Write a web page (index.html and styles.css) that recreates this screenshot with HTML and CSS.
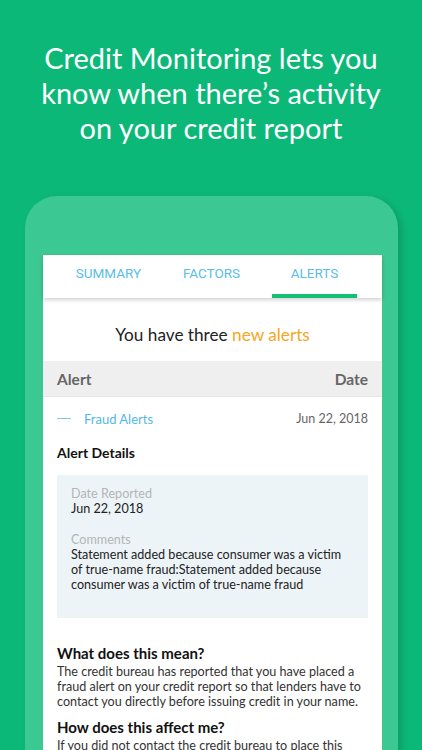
FILE: index.html
```html
<!DOCTYPE html>
<html>
<head>
<meta charset="utf-8">
<link rel="stylesheet" href="styles.css">
</head>
<body>
<div class="page">
  <h1 class="title">Credit Monitoring lets you know when there’s activity on your credit report</h1>
  <div class="phone">
    <div class="screen">
      <div class="tabs">
        <div class="tab">SUMMARY</div>
        <div class="tab">FACTORS</div>
        <div class="tab active">ALERTS</div>
      </div>
      <p class="summary">You have three <span class="hl">new alerts</span></p>
      <div class="thead"><span>Alert</span><span>Date</span></div>
      <div class="row">
        <span class="name"><span class="dash"></span>Fraud Alerts</span>
        <span class="date">Jun 22, 2018</span>
      </div>
      <div class="details">
        <h2 class="sub">Alert Details</h2>
        <div class="box">
          <div class="label">Date Reported</div>
          <div class="value">Jun 22, 2018</div>
          <div class="label gap">Comments</div>
          <div class="value">Statement added because consumer was a victim of true-name fraud:Statement added because consumer was a victim of true-name fraud</div>
        </div>
        <h3 class="q">What does this mean?</h3>
        <p class="a">The credit bureau has reported that you have placed a fraud alert on your credit report so that lenders have to contact you directly before issuing credit in your name.</p>
        <h3 class="q">How does this affect me?</h3>
        <p class="a">If you did not contact the credit bureau to place this fraud alert, you should contact them immediately.</p>
      </div>
    </div>
  </div>
</div>
</body>
</html>
```
FILE: styles.css
```css
html, body {
  margin: 0;
  padding: 0;
}
body {
  background: #0cb878;
  font-family: Lato, "Noto Sans", sans-serif;
  overflow: hidden;
}
.page {
  width: 422px;
  height: 750px;
  overflow: hidden;
  display: flex;
  flex-direction: column;
  align-items: flex-start;
}
.title {
  margin: 0;
  padding: 40px 36px 0;
  width: 422px;
  box-sizing: border-box;
  text-align: center;
  color: #fff;
  font-family: Lato, sans-serif;
  font-weight: 400;
  font-size: 29px;
  line-height: 35px;
}
.phone {
  margin: 51px 0 0 25px;
  width: 373px;
  flex: 1;
  background: #3cc893;
  border-radius: 32px 32px 0 0;
  padding: 59px 16px 0 18px;
  box-sizing: border-box;
  box-shadow: 4px 2px 6px rgba(0, 90, 50, 0.25);
  display: flex;
}
.screen {
  flex: 1;
  background: #fff;
  display: flex;
  flex-direction: column;
}
.tabs {
  display: flex;
  gap: 18px;
  padding-left: 23px;
  height: 43px;
  box-shadow: 0 2px 4px rgba(0, 0, 0, 0.18);
  position: relative;
  z-index: 1;
}
.tab {
  width: 85px;
  box-sizing: border-box;
  text-align: center;
  font-family: Roboto, sans-serif;
  font-size: 13.5px;
  color: #5bbde9;
  padding-top: 10px;
  border-bottom: 4px solid transparent;
}
.tab.active {
  border-bottom-color: #13bf72;
}
.summary {
  margin: 0;
  padding: 27px 0 16px;
  text-align: center;
  font-size: 17.2px;
  color: #222;
  line-height: 20px;
}
.hl {
  color: #f5a623;
}
.thead {
  display: flex;
  justify-content: space-between;
  background: #efefef;
  border-bottom: 1px solid #e6e6e6;
  height: 35px;
  align-items: center;
  padding: 0 14px;
  font-weight: 700;
  font-size: 15.5px;
  color: #666;
}
.row {
  display: flex;
  justify-content: space-between;
  align-items: center;
  padding: 13px 14px 0;
  height: 17px;
  font-size: 13px;
}
.name {
  display: flex;
  align-items: center;
  color: #55b8e6;
}
.dash {
  width: 14px;
  height: 1px;
  background: #7cc9ec;
  margin-right: 13px;
}
.date {
  color: #666;
  font-size: 12.5px;
}
.details {
  padding: 0 14px;
}
.sub {
  margin: 0;
  padding-top: 17px;
  font-size: 14px;
  font-weight: 700;
  color: #111;
  line-height: 18px;
}
.box {
  margin-top: 13px;
  background: #edf4f8;
  padding: 11px 14px 27px;
  height: 143px;
  box-sizing: border-box;
  font-size: 12.6px;
  line-height: 15px;
}
.label {
  color: #b5b5b5;
}
.label.gap {
  margin-top: 16px;
}
.value {
  color: #222;
}
.q {
  margin: 26px 0 2px;
  font-size: 15px;
  font-weight: 700;
  color: #111;
  line-height: 18px;
}
.q + .a + .q {
  margin-top: 9px;
}
.a {
  margin: 0;
  font-size: 12.6px;
  line-height: 15px;
  color: #333;
}
```
